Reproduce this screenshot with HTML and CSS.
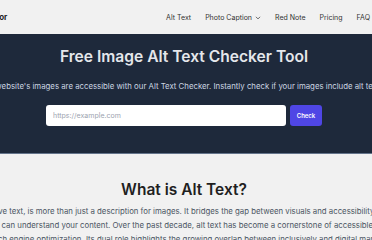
FILE: index.html
```html
<!DOCTYPE html>
<html lang="en">
<head>
    <meta charset="UTF-8">
    <meta name="viewport" content="width=device-width, initial-scale=1.0">
    <title>Alt Text Checker</title>
    <link rel="stylesheet" href="styles.css">
</head>
<body>
    <header class="site-header">
        <a href="#" class="logo">Alt Text Generator</a>
        <nav class="nav">
            <a href="#" class="nav-link">Alt Text</a>
            <a href="#" class="nav-link">Photo Caption
                <svg class="chevron" viewBox="0 0 10 10" width="6" height="6"><path d="M2 3.5 L5 6.5 L8 3.5" fill="none" stroke="currentColor" stroke-width="1.2" stroke-linecap="round" stroke-linejoin="round"/></svg>
            </a>
            <a href="#" class="nav-link">Red Note</a>
            <a href="#" class="nav-link">Pricing</a>
            <a href="#" class="nav-link">FAQ</a>
        </nav>
    </header>

    <section class="hero">
        <h1 class="hero-title">Free Image Alt Text Checker Tool</h1>
        <p class="hero-subtitle">Ensure your website's images are accessible with our Alt Text Checker. Instantly check if your images include alt text attributes.</p>
        <form class="check-form" onsubmit="return false">
            <input type="text" class="url-input" placeholder="https://example.com">
            <button type="submit" class="check-btn">Check</button>
        </form>
    </section>

    <section class="about">
        <h2 class="about-title">What is Alt Text?</h2>
        <p class="about-text">Alt text, or alternative text, is more than just a description for images. It bridges the gap between visuals and accessibility, making sure that<br>
        ensuring all users can understand your content. Over the past decade, alt text has become a cornerstone of accessible web design and<br>
        for search engine optimization. Its dual role highlights the growing overlap between inclusively and digital marketing.</p>
    </section>
</body>
</html>
```

FILE: styles.css
```css
:root {
    --bg-light: #f1f1f1;
    --bg-dark: #1e293b;
    --text-dark: #1f1f1f;
    --text-muted: #4b5563;
    --accent: #4f46e5;
}

* {
    margin: 0;
    padding: 0;
    box-sizing: border-box;
}

body {
    font-family: Inter, "Noto Sans", sans-serif;
    background: var(--bg-light);
    color: var(--text-dark);
    overflow: hidden;
}

.site-header {
    height: 34px;
    display: flex;
    justify-content: space-between;
    align-items: center;
    padding-right: 2px;
}

.logo {
    margin-left: -64px;
    font-size: 8px;
    font-weight: 700;
    color: var(--text-dark);
    text-decoration: none;
    white-space: nowrap;
}

.nav {
    display: flex;
    align-items: center;
    gap: 14px;
}

.nav-link {
    display: flex;
    align-items: center;
    gap: 3px;
    font-size: 7px;
    color: #333;
    text-decoration: none;
    white-space: nowrap;
}

.chevron {
    margin-top: 1px;
}

.hero {
    background: var(--bg-dark);
    border-bottom: 1px solid #64748b;
    height: 120px;
    padding: 12px 4px 0 0;
    text-align: center;
}

.hero-title {
    font-size: 15.6px;
    font-weight: 600;
    color: #e5e7eb;
    line-height: 22px;
}

.hero-subtitle {
    margin: 13px -300px 0;
    font-size: 7.8px;
    color: #cbd5e1;
    white-space: nowrap;
}

.check-form {
    display: flex;
    justify-content: center;
    gap: 4px;
    margin-top: 14px;
}

.url-input {
    width: 240px;
    height: 21px;
    padding: 0 7px;
    border: none;
    border-radius: 3px;
    background: #fff;
    font-family: inherit;
    font-size: 7px;
}

.url-input::placeholder {
    color: #9ca3af;
}

.check-btn {
    width: 32px;
    height: 21px;
    border: none;
    border-radius: 3px;
    background: var(--accent);
    color: #fff;
    font-family: inherit;
    font-size: 6px;
    font-weight: 600;
}

.about {
    padding: 25px 4px 0 0;
    text-align: center;
}

.about-title {
    font-size: 15.5px;
    font-weight: 600;
    color: var(--text-dark);
    line-height: 22px;
}

.about-text {
    margin: 3px -300px 0;
    font-size: 7.8px;
    line-height: 14px;
    color: var(--text-muted);
    white-space: nowrap;
}
```
